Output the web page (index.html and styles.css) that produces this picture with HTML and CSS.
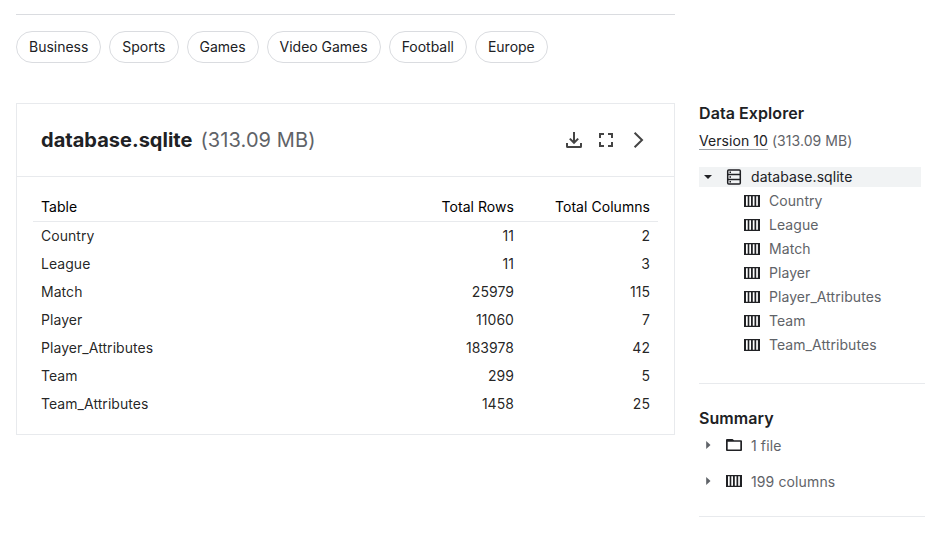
FILE: index.html
```html
<!DOCTYPE html>
<html lang="en">
<head>
<meta charset="utf-8">
<title>Data Explorer</title>
<link rel="stylesheet" href="styles.css">
</head>
<body>
<svg width="0" height="0" class="defs">
  <symbol id="columns" viewBox="0 0 16 12"><path fill-rule="evenodd" d="M0 0h16v12H0zM2 1.200v9.600h1.700v-9.600zM5.300 1.200v9.600h1.700v-9.600zM8.800 1.200v9.600h1.700v-9.600zM12.200 1.200v9.600h1.700v-9.600z"/></symbol>
  <symbol id="caret" viewBox="0 0 8 8"><path d="M2.200 0 6.500 4 2.200 8z"/></symbol>
</svg>
<div class="page">
  <main class="main">
    <div class="tags">
      <span class="tag">Business</span><span class="tag">Sports</span><span class="tag">Games</span><span class="tag">Video Games</span><span class="tag">Football</span><span class="tag">Europe</span>
    </div>
    <section class="card">
      <header class="card-head">
        <h2>database.sqlite</h2><span class="size">(313.09 MB)</span>
        <div class="actions">
          <svg width="24" height="24" viewBox="0 0 24 24"><path d="M5 15v3.500a.5.5 0 0 0 .5.5h13a.5.5 0 0 0 .5-.5V15M12 4v10.500M7.800 10.600l4.200 4.200 4.200-4.200"/></svg>
          <svg width="24" height="24" viewBox="0 0 24 24"><path d="M6 10V6h4M14 6h4v4M18 14v4h-4M10 18H6v-4"/></svg>
          <svg width="24" height="24" viewBox="0 0 24 24"><path d="M8.600 4.800 16 12l-7.400 7.200"/></svg>
        </div>
      </header>
      <table>
        <thead><tr><th>Table</th><th>Total Rows</th><th class="cols">Total Columns</th></tr></thead>
        <tbody>
          <tr><td>Country</td><td>11</td><td>2</td></tr>
          <tr><td>League</td><td>11</td><td>3</td></tr>
          <tr><td>Match</td><td>25979</td><td>115</td></tr>
          <tr><td>Player</td><td>11060</td><td>7</td></tr>
          <tr><td>Player_Attributes</td><td>183978</td><td>42</td></tr>
          <tr><td>Team</td><td>299</td><td>5</td></tr>
          <tr><td>Team_Attributes</td><td>1458</td><td>25</td></tr>
        </tbody>
      </table>
    </section>
  </main>
  <aside class="side">
    <section class="explorer">
      <h3>Data Explorer</h3>
      <div class="version"><a>Version 10</a> (313.09 MB)</div>
      <div class="root">
        <svg class="caret" width="8" height="8"><path d="M0 2h8L4 6z"/></svg>
        <svg class="db" width="16" height="16" viewBox="0 0 16 16"><rect x="1.700" y="1" width="12.600" height="14" rx="1"/><path d="M1.700 5.500h12.600M1.700 10.500h12.600M3.500 3.300h1.500M3.500 8h1.500M3.500 12.800h1.500"/></svg>
        <span>database.sqlite</span>
      </div>
      <ul>
        <li><svg class="col"><use href="#columns"/></svg>Country</li>
        <li><svg class="col"><use href="#columns"/></svg>League</li>
        <li><svg class="col"><use href="#columns"/></svg>Match</li>
        <li><svg class="col"><use href="#columns"/></svg>Player</li>
        <li><svg class="col"><use href="#columns"/></svg>Player_Attributes</li>
        <li><svg class="col"><use href="#columns"/></svg>Team</li>
        <li><svg class="col"><use href="#columns"/></svg>Team_Attributes</li>
      </ul>
    </section>
    <section class="summary">
      <h3>Summary</h3>
      <div class="sum"><svg class="caret grey"><use href="#caret"/></svg><svg class="folder" width="16" height="12" viewBox="0 0 16 12"><path fill-rule="evenodd" d="M1 0h5.500L8 1.300h7a1 1 0 0 1 1 1V11a1 1 0 0 1-1 1H1a1 1 0 0 1-1-1V1a1 1 0 0 1 1-1zM1.700 2.800v7.700h12.600V2.800z"/></svg><span>1 file</span></div>
      <div class="sum"><svg class="caret grey"><use href="#caret"/></svg><svg class="col"><use href="#columns"/></svg><span>199 columns</span></div>
    </section>
  </aside>
</div>
</body>
</html>
```
FILE: styles.css
```css
* { box-sizing: border-box; }
body { margin: 0; background: #fff; color: #202124; font: 400 14px/20px Inter, sans-serif; overflow: hidden; }
.defs { display: none; }
svg { display: block; flex: none; }
h2, h3, ul { margin: 0; padding: 0; }
.page { display: flex; gap: 24px; padding: 14px 8px 0 16px; }
.main { width: 659px; border-top: 1px solid #dadce0; padding-top: 16px; }
.tags { display: flex; gap: 8px; margin-bottom: 40px; letter-spacing: -.015px; }
.tag { height: 32px; padding: 0 12px; border: 1px solid #dadce0; border-radius: 16px; line-height: 30px; }
.card { height: 332px; border: 1px solid #e8eaed; }
.card-head { display: flex; align-items: center; height: 73px; padding: 0 24px; border-bottom: 1px solid #e8eaed; }
.card-head h2 { font-size: 20px; font-weight: 700; line-height: 28px; letter-spacing: .02px; }
.size { margin-left: 8px; font-size: 20px; line-height: 28px; letter-spacing: .1px; color: #5f6368; }
.actions { display: flex; gap: 8px; margin-left: auto; }
.actions svg { fill: none; stroke: #444; stroke-width: 2; }
table { width: 625px; margin: 16px 16px 0; border-collapse: separate; border-spacing: 0; color: rgba(0,0,0,.87); letter-spacing: .05px; }
th, td { height: 28px; padding: 0 8px; text-align: right; font-weight: 400; }
th { height: 29px; border-bottom: 1px solid #e8eaed; color: #000; }
th:first-child, td:first-child { text-align: left; }
.cols { width: 136px; }
.side { width: 226px; padding-top: 87px; letter-spacing: .06px; }
h3 { font-size: 16px; font-weight: 600; line-height: 24px; letter-spacing: .08px; }
.explorer { height: 283px; border-bottom: 1px solid #e8eaed; }
.version { margin-top: 6px; color: #5f6368; }
.version a { display: inline-block; height: 19px; color: #202124; border-bottom: 1px solid #9aa0a6; }
.root { display: flex; align-items: center; width: 222px; height: 20px; margin-top: 16px; padding-left: 5px; background: #f1f3f4; }
.caret { width: 8px; height: 8px; fill: #202124; }
.grey { margin-bottom: 2px; fill: #5f6368; }
.db { margin: 0 9px 0 14px; fill: none; stroke: #202124; stroke-width: 1.5; }
ul { list-style: none; margin-top: 2px; color: #5f6368; }
li { display: flex; align-items: center; height: 24px; padding-left: 45px; }
.col { width: 16px; height: 12px; fill: #202124; }
li .col { margin-right: 9px; }
.summary { height: 133px; padding-top: 22px; border-bottom: 1px solid #e8eaed; }
.sum { display: flex; align-items: center; height: 20px; margin-top: 6px; padding-left: 5px; color: #5f6368; letter-spacing: .12px; }
.sum + .sum { margin-top: 16px; }
.sum .col, .folder { margin: 0 9px 2px 14px; fill: #202124; }
```
